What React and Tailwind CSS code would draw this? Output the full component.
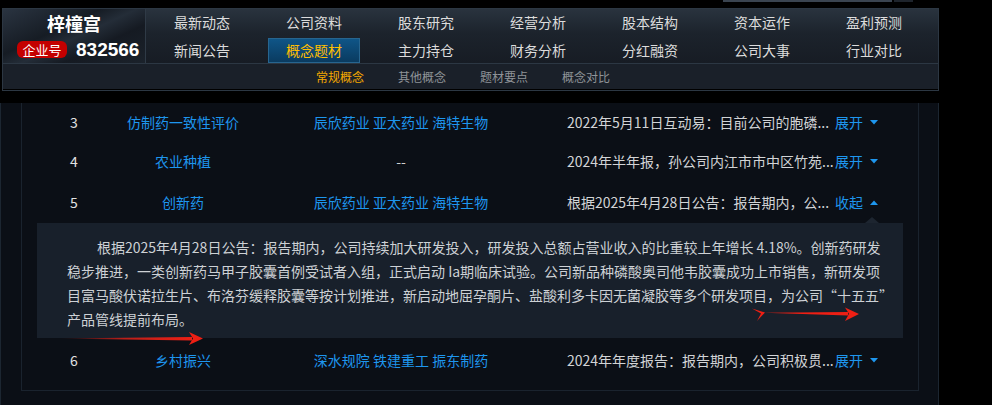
import React from "react";

const navTop = ["最新动态", "公司资料", "股东研究", "经营分析", "股本结构", "资本运作", "盈利预测"];
const navBottom = ["新闻公告", "概念题材", "主力持仓", "财务分析", "分红融资", "公司大事", "行业对比"];
const subNav = ["常规概念", "其他概念", "题材要点", "概念对比"];

const rows = [
  { no: "3", name: "仿制药一致性评价", stocks: ["辰欣药业", "亚太药业", "海特生物"], desc: "2022年5月11日互动易：目前公司的胞磷...", h: "h-[38px]" },
  { no: "4", name: "农业种植", stocks: null, desc: "2024年半年报，孙公司内江市市中区竹苑...", h: "h-[41px]" },
  { no: "5", name: "创新药", stocks: ["辰欣药业", "亚太药业", "海特生物"], desc: "根据2025年4月28日公告：报告期内，公...", h: "h-[41px]", open: true },
];

const lastRow = { no: "6", name: "乡村振兴", stocks: ["深水规院", "铁建重工", "振东制药"], desc: "2024年年度报告：报告期内，公司积极贯...", h: "h-[44px]" };

const detailLines = [
  "根据2025年4月28日公告：报告期内，公司持续加大研发投入，研发投入总额占营业收入的比重较上年增长 4.18%。创新药研发",
  "稳步推进，一类创新药马甲子胶囊首例受试者入组，正式启动 Ia期临床试验。公司新品种磷酸奥司他韦胶囊成功上市销售，新研发项",
  "目富马酸伏诺拉生片、布洛芬缓释胶囊等按计划推进，新启动地屈孕酮片、盐酸利多卡因无菌凝胶等多个研发项目，为公司“十五五”",
  "产品管线提前布局。",
];

const Caret = ({ up }) => (
  <svg width="8" height="5" viewBox="0 0 8 5" className="ml-[7px]">
    {up ? <path d="M0 5 L4 0.5 L8 5 Z" fill="#1e96ee" /> : <path d="M0 0 L8 0 L4 4.5 Z" fill="#1e96ee" />}
  </svg>
);

const Row = ({ row }) => (
  <div className={`flex items-center text-[14px] ${row.h}`}>
    <div className="w-[104px] text-center text-[#e2e2e2]">{row.no}</div>
    <div className="w-[114px] text-center text-[#1e96ee] whitespace-nowrap">{row.name}</div>
    <div className="w-[322px] text-center text-[#1e96ee] whitespace-nowrap">
      {row.stocks ? row.stocks.join(" ") : <span className="text-[#d0d0d0]">--</span>}
    </div>
    <div className="pl-[5px] flex items-center whitespace-nowrap">
      <span className="w-[268px] overflow-hidden text-[#d2d4d6]">{row.desc}</span>
      <span className="text-[#1e96ee]">{row.open ? "收起" : "展开"}</span>
      <Caret up={row.open} />
    </div>
  </div>
);

export default function App() {
  return (
    <div className="relative w-[992px] h-[405px] bg-black overflow-hidden font-['Noto_Sans_CJK_SC','Noto_Sans',sans-serif]">
      {/* sliver of the bar above */}
      <div className="h-[8px] flex items-start">
        <div className="ml-[723px] w-[169px] h-[2px] bg-[#3a4450]" />
        <div className="ml-[2px] w-[19px] h-[2px] bg-[#1e242c]" />
      </div>

      {/* header */}
      <div className="ml-[2px] w-[937px] h-[83px] border border-[#2c3743] flex flex-col">
        <div className="flex h-[54px]">
          <div className="w-[143px] border-r border-[#2f3a46] flex flex-col bg-[linear-gradient(155deg,#2a3441_0%,#161c24_38%,#242d38_52%,#151a22_68%,#1b222b_100%)]">
            <div className="h-[27px] flex items-center justify-center text-white text-[18px] font-bold leading-none">梓橦宫</div>
            <div className="h-[27px] flex items-center">
              <span className="ml-[14px] w-[50px] h-[17px] rounded-[6px] bg-[#c40000] text-white text-[13px] leading-[17px] text-center">企业号</span>
              <span className="ml-[9px] text-white text-[19px] font-bold font-['Liberation_Sans',sans-serif] leading-none">832566</span>
            </div>
          </div>
          <div className="flex-1 bg-[linear-gradient(180deg,#29333e_0%,#1c232c_45%,#171c24_100%)]">
            <div className="grid grid-cols-7 w-[784px] h-[27px]">
              {navTop.map((t) => (
                <div key={t} className="flex items-center justify-center text-[14px] text-[#dcdcdc]">{t}</div>
              ))}
            </div>
            <div className="grid grid-cols-7 w-[784px] h-[27px]">
              {navBottom.map((t) => (
                <div key={t} className="flex items-end justify-center">
                  {t === "概念题材" ? (
                    <div className="w-[92px] h-[25px] flex items-center justify-center border border-[#27658f] bg-[linear-gradient(180deg,#0f5587,#0a3b60)] text-[14px] text-[#ffbf00]">{t}</div>
                  ) : (
                    <div className="h-[25px] flex items-center text-[14px] text-[#dcdcdc]">{t}</div>
                  )}
                </div>
              ))}
            </div>
          </div>
        </div>
        <div className="h-[26px] border-t border-[#2c3743] bg-[#1a2029] flex items-center">
          <div className="ml-[313px] flex">
            {subNav.map((t, i) => (
              <div key={t} className={`w-[82px] text-[12px] ${i === 0 ? "text-[#f5a800]" : "text-[#8f9398]"}`}>{t}</div>
            ))}
          </div>
        </div>
      </div>

      {/* content */}
      <div className="mt-[12px] w-[939px] h-[302px] bg-[#0b0f16] border-l border-r border-[#1c2631]">
        <div className="ml-[20px] w-[898px] h-[288px] border-l border-r border-b border-[#1a232e] flex flex-col">
          {rows.map((r) => (
            <Row key={r.no} row={r} />
          ))}
          <div className="relative ml-[15px] w-[866px] h-[115px] bg-[#18202b] pt-[12px] pl-[30px] text-[14px] leading-[24px] text-[#cdd1d5]">
            <div className="absolute right-[24px] -top-[6px] w-0 h-0 border-l-[7px] border-r-[7px] border-b-[6px] border-l-transparent border-r-transparent border-b-[#1d2530]" />
            {detailLines.map((l, i) => (
              <div key={i} className={`whitespace-nowrap ${i === 0 ? "indent-[30px]" : ""}`}>{l}</div>
            ))}
          </div>
          <Row row={lastRow} />
        </div>
      </div>

      {/* red annotation arrows */}
      <svg className="absolute inset-0 pointer-events-none" width="992" height="405" viewBox="0 0 992 405">
        <defs>
          <linearGradient id="fade" x1="0" x2="1" y1="0" y2="0">
            <stop offset="0" stopColor="#e8231a" stopOpacity="0" />
            <stop offset="0.5" stopColor="#e8231a" stopOpacity="0.8" />
            <stop offset="1" stopColor="#ee1f14" />
          </linearGradient>
        </defs>
        <path d="M57 338.6 L192 337 L192 340.4 Z" fill="url(#fade)" />
        <path d="M189 332 L203 338.6 L189 345 L193 338.6 Z" fill="#ee1f14" />
        <path d="M752 308.5 L765 312.5 L757 321 L761 313.5 Z" fill="#ee1f14" />
        <path d="M764 312.8 L848 312 L848 315.6 Z" fill="#ee1f14" />
        <path d="M845 307.5 L859 314 L845 321 L849 313.8 Z" fill="#ee1f14" />
      </svg>
    </div>
  );
}
